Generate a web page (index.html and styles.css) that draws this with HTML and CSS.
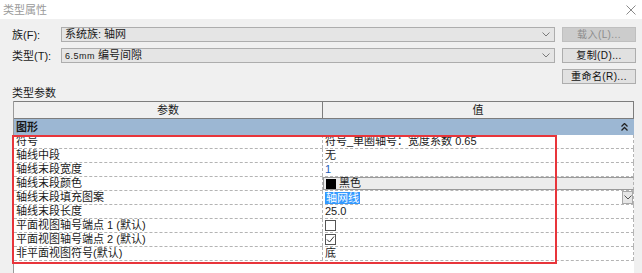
FILE: index.html
```html
<!DOCTYPE html>
<html lang="zh">
<head>
<meta charset="utf-8">
<title>类型属性</title>
<link rel="stylesheet" href="styles.css">
</head>
<body>
<div class="dialog">
  <div class="titlebar">
    <span class="title">类型属性</span>
    <svg class="close" width="10" height="10" viewBox="0 0 10 10"><path d="M0.5 0.5L9.5 9.5M9.5 0.5L0.5 9.5" stroke="#8a8a8a" stroke-width="1" fill="none"/></svg>
  </div>
  <div class="body">
    <div class="formrow">
      <span class="label">族(F):</span>
      <div class="combo"><span>系统族: 轴网</span><svg class="arrow" width="8" height="5" viewBox="0 0 8 5"><path d="M0.5 0.5L4 4L7.5 0.5" stroke="#7a7a7a" fill="none"/></svg></div>
      <button class="btn disabled">载入(L)...</button>
    </div>
    <div class="formrow">
      <span class="label">类型(T):</span>
      <div class="combo"><span><span class="small">6.5mm</span> 编号间隙</span><svg class="arrow" width="8" height="5" viewBox="0 0 8 5"><path d="M0.5 0.5L4 4L7.5 0.5" stroke="#7a7a7a" fill="none"/></svg></div>
      <button class="btn">复制(D)...</button>
    </div>
    <div class="formrow right">
      <button class="btn">重命名(R)...</button>
    </div>
    <div class="section">类型参数</div>
    <div class="grid">
      <div class="head">
        <div class="hcell c1">参数</div>
        <div class="hcell c2">值</div>
      </div>
      <div class="group">
        <span>图形</span>
        <svg class="collapse" width="7" height="8" viewBox="0 0 7 8"><path d="M0.5 3.5L3.5 0.5L6.5 3.5M0.5 7.5L3.5 4.5L6.5 7.5" stroke="#222" stroke-width="1.3" fill="none"/></svg>
      </div>
      <div class="rows">
        <div class="row"><div class="cell c1">符号</div><div class="cell c2">符号_单圈轴号：宽度系数 0.65</div></div>
        <div class="row"><div class="cell c1">轴线中段</div><div class="cell c2">无</div></div>
        <div class="row"><div class="cell c1">轴线末段宽度</div><div class="cell c2 blue">1</div></div>
        <div class="row"><div class="cell c1">轴线末段颜色</div><div class="cell c2 colorbtn"><span class="swatch"></span>黑色</div></div>
        <div class="row"><div class="cell c1">轴线末段填充图案</div><div class="cell c2 dropcell"><span class="sel">轴网线</span><span class="dropbtn"><svg width="8" height="5" viewBox="0 0 8 5"><path d="M0.5 0.5L4 4L7.5 0.5" stroke="#555" fill="none"/></svg></span></div></div>
        <div class="row"><div class="cell c1">轴线末段长度</div><div class="cell c2">25.0</div></div>
        <div class="row"><div class="cell c1">平面视图轴号端点 1 (默认)</div><div class="cell c2"><span class="check"></span></div></div>
        <div class="row"><div class="cell c1">平面视图轴号端点 2 (默认)</div><div class="cell c2"><span class="check"><svg width="9" height="9" viewBox="0 0 9 9"><path d="M1 4.5L3.5 7L8 1.5" stroke="#333" stroke-width="1" fill="none"/></svg></span></div></div>
        <div class="row"><div class="cell c1">非平面视图符号(默认)</div><div class="cell c2">底</div></div>
      </div>
      <div class="redbox"></div>
    </div>
  </div>
</div>
</body>
</html>
```
FILE: styles.css
```css
* { box-sizing: border-box; }
html, body { margin: 0; padding: 0; }
body {
  width: 642px;
  height: 273px;
  overflow: hidden;
  background: #f0f0f0;
  font-family: "Liberation Sans", "Noto Sans CJK SC", sans-serif;
  font-size: 11px;
  color: #1a1a1a;
}
.dialog { width: 642px; height: 273px; display: flex; flex-direction: column; }
.titlebar {
  height: 19px;
  background: #fff;
  display: flex;
  align-items: center;
  justify-content: space-between;
  padding: 0 6px 0 3px;
}
.title { color: #9a9a9a; font-size: 11px; line-height: 14px; }
.body { flex: 1; padding: 8px 6px 0 12px; display: flex; flex-direction: column; }
.formrow { display: flex; align-items: center; height: 15px; margin-bottom: 6px; }
.formrow.right { justify-content: flex-end; margin-bottom: 0; }
.label { width: 49px; line-height: 14px; font-size: 11px; }
.combo {
  width: 494px;
  height: 15px;
  background: #e5e5e5;
  border: 1px solid #adadad;
  display: flex;
  align-items: center;
  justify-content: space-between;
  padding: 0 4px 0 3px;
  line-height: 13px;
}
.small { font-size: 9px; letter-spacing: 0.5px; }
.btn {
  margin-left: 7px;
  width: 74px;
  height: 15px;
  padding: 0;
  background: #e1e1e1;
  border: 1px solid #adadad;
  font-family: inherit;
  font-size: 10px;
  line-height: 13px;
  color: #111;
  letter-spacing: 0.4px;
}
.btn.disabled { background: #cccccc; border-color: #bfbfbf; color: #8d8d8d; }
.section { margin-top: 2px; height: 15px; line-height: 14px; font-size: 11px; }
.grid {
  position: relative;
  flex: 1;
  margin-left: 1px;
  width: 621px;
  background: #fff;
  border-left: 1px solid #9a9a9a;
  display: flex;
  flex-direction: column;
}
.head { display: flex; height: 18px; border: 1px solid #7d7d7d; border-left: 0; background: #f0f0f0; }
.hcell { display: flex; align-items: center; justify-content: center; line-height: 14px; font-size: 11px; }
.hcell.c1 { width: 309px; border-right: 1px solid #7d7d7d; }
.hcell.c2 { flex: 1; }
.group {
  height: 16px;
  background: #9cb7d3;
  display: flex;
  align-items: center;
  justify-content: space-between;
  padding: 0 6px 0 2px;
  font-weight: bold;
  line-height: 14px;
}
.rows { display: flex; flex-direction: column; }
.row { display: flex; height: 14px; border-bottom: 1px dashed #b4b4b4; }
.cell { line-height: 13px; font-size: 11px; white-space: nowrap; display: flex; align-items: center; }
.cell.c1 { width: 309px; padding-left: 2px; border-right: 1px dashed #b4b4b4; }
.cell.c2 { flex: 1; padding-left: 2px; border-right: 1px dashed #b4b4b4; }
.blue { color: #1f5fb8; }
.colorbtn { background: #ececec; border: 1px solid #9a9a9a; border-right: 2px solid #7a7a7a; }
.swatch { width: 10px; height: 10px; background: #000; margin-right: 3px; }
.dropcell { justify-content: space-between; padding-right: 0; }
.sel { background: #3399ff; color: #fff; line-height: 12px; padding: 0 1px; }
.dropbtn {
  width: 11px; height: 13px;
  background: #e6e6e6;
  border: 1px solid #a8a8a8;
  display: flex; align-items: center; justify-content: center;
}
.check {
  width: 11px; height: 11px;
  border: 1px solid #555;
  background: #fff;
  display: flex; align-items: center; justify-content: center;
}
.redbox {
  position: absolute;
  left: -2px;
  top: 34px;
  width: 545px;
  height: 129px;
  border: 2px solid #e8353b;
  pointer-events: none;
}
```
